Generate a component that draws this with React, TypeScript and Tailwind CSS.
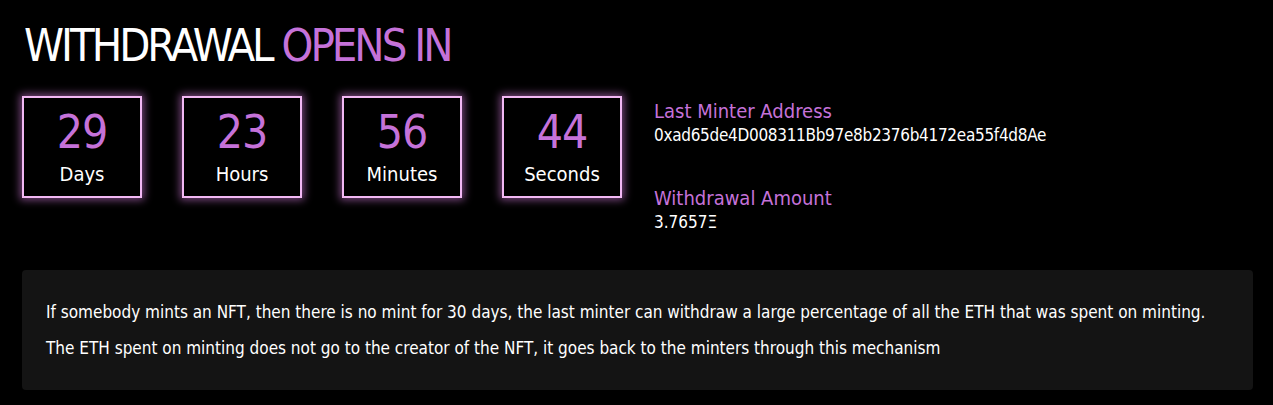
import React from "react";

const font = { fontFamily: '"DejaVu Sans Condensed", "Liberation Sans Narrow", "Liberation Sans", sans-serif' };

function Box({ value, label }: { value: string; label: string }) {
  return (
    <div className="w-[120px] h-[102px] border-2 border-[#f2b8f4] shadow-[0_0_8px_2px_rgba(220,130,230,0.55)] flex flex-col items-center justify-center">
      <div className="text-[46px] leading-[48px] tracking-[-1px] text-[#c572d9]">{value}</div>
      <div className="text-[20px] leading-[24px] text-white mt-[6px]">{label}</div>
    </div>
  );
}

export default function App() {
  return (
    <div className="min-h-[405px] bg-black pl-[22px] pr-[20px] pt-[20px] pb-[16px]" style={font}>
      <h1 className="text-[45px] leading-[52px] tracking-[-3px] text-white pl-[2px]">
        WITHDRAWAL <span className="text-[#c572d9]">OPENS IN</span>
      </h1>
      <div className="flex items-start mt-[24px] gap-[40px]">
        <Box value="29" label="Days" />
        <Box value="23" label="Hours" />
        <Box value="56" label="Minutes" />
        <Box value="44" label="Seconds" />
        <div className="ml-[-8px] mt-[2px]">
          <div className="text-[20px] leading-[26px] text-[#c572d9]">Last Minter Address</div>
          <div className="text-[17px] leading-[22px] tracking-[-0.3px] text-white">0xad65de4D008311Bb97e8b2376b4172ea55f4d8Ae</div>
          <div className="text-[20px] leading-[26px] text-[#c572d9] mt-[39px]">Withdrawal Amount</div>
          <div className="text-[17px] leading-[22px] text-white">3.7657Ξ</div>
        </div>
      </div>
      <div className="mt-[37px] bg-[#141414] rounded-[4px] px-[24px] py-[24px] text-[17px] text-white">
        <p className="leading-[36px]">If somebody mints an NFT, then there is no mint for 30 days, the last minter can withdraw a large percentage of all the ETH that was spent on minting.</p>
        <p className="leading-[36px]">The ETH spent on minting does not go to the creator of the NFT, it goes back to the minters through this mechanism</p>
      </div>
    </div>
  );
}
